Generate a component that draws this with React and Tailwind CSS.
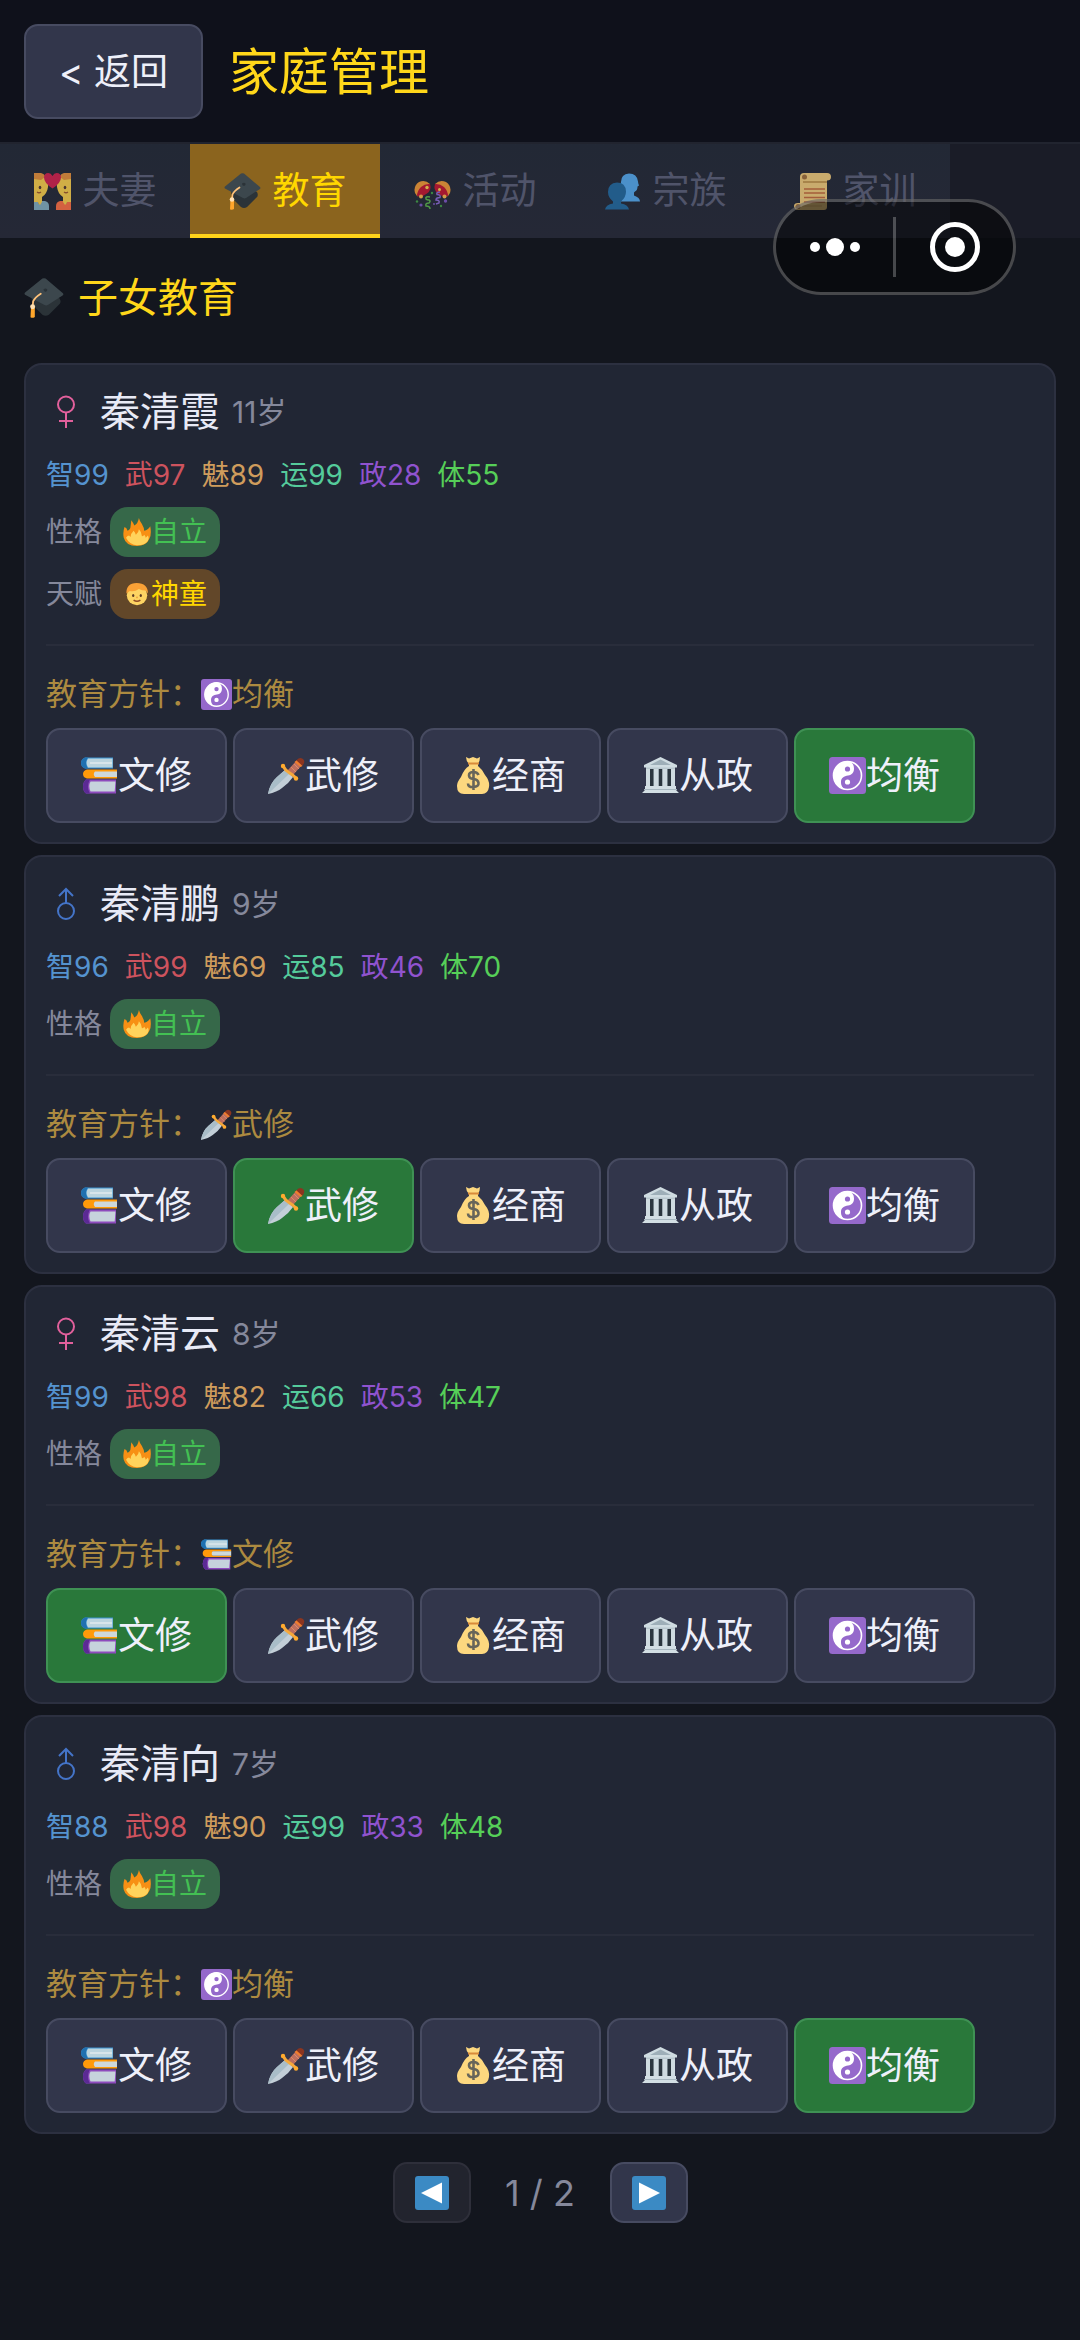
import { useState } from 'react';
import clsx from 'clsx';

const CoupleIcon = ({ className }) => (
  <svg viewBox="0 0 37 37" className={className} aria-hidden="true">
    <path d="M0 3Q6 0 11 3q4 4 3 11-1 7-6 10v5H0z" fill="#fcd04b" />
    <path d="M0 0h7q4 1 4 4l-4 3-7-1z" fill="#e8923a" />
    <path d="M37 3Q31 0 26 3q-4 4-3 11 1 7 6 10v5h8z" fill="#fcd04b" />
    <path d="M37 0h-7q-4 1-4 4l4 3 7-1z" fill="#e8923a" />
    <ellipse cx="6" cy="14.500" rx="1.300" ry="1.800" fill="#543930" />
    <ellipse cx="31" cy="14.500" rx="1.300" ry="1.800" fill="#543930" />
    <path d="M3 19q2 1.500 4 0M34 19q-2 1.500-4 0" stroke="#a05a2c" strokeWidth="1.300" fill="none" />
    <path d="M0 29h4l1 2 2-3h4q4 1 4 5v4H0z" fill="#82aec0" />
    <path d="M37 29h-4l-1 2-2-3h-4q-4 1-4 5v4h15z" fill="#ff7043" />
    <path d="M5 25h3v4l-2 3-2-2zM32 25h-3v4l2 3 2-2z" fill="#fcd04b" />
    <path d="M18.500 15.500Q10 10 10 4.500 10 0 14.300 0q2.700 0 4.200 3Q20 0 22.700 0 27 0 27 4.500q0 5.500-8.500 11z" fill="#d4214d" />
  </svg>
);

const CapIcon = ({ className }) => (
  <svg viewBox="0 0 37 37" className={className} aria-hidden="true">
    <path d="M7 18l13-7 13 8q2 4-1 6l-9 9q-3 2-6 0l-7-7q-3-4-3-9z" fill="#2b3338" />
    <path d="M17 .5q1.500-.7 3 0L36 14q.8 1 0 2L22 25q-1.500.8-3 0L1 15.500q-1-1 0-2z" fill="#3c474d" />
    <path d="M18 10.500q2-1.500 3.500 0 .6 1.500-1.500 2.500-2-.5-2-2.500z" fill="#2b3338" />
    <path d="M15.500 14.500Q10 18 8.500 21.500L8 26" stroke="#ffc27a" strokeWidth="1.700" fill="none" strokeLinecap="round" />
    <path d="M6.500 27h3.500v9q-2 1.500-4 .3z" fill="#ffa62b" />
    <circle cx="8" cy="26.500" r="2.300" fill="#ffe0b2" />
  </svg>
);

const PartyIcon = ({ className }) => (
  <svg viewBox="0 0 37 37" className={className} aria-hidden="true">
    <path d="M1 20Q-1 13 5 9q6-3 11 2L8 21q-3 3-5 2z" fill="#f59b35" />
    <path d="M36 20q2-7-4-11-6-3-11 2l8 10q3 3 5 2z" fill="#f59b35" />
    <path d="M16 11q2 6-3 9.500-5 4-10 2.500 0-5 4-9 4-3.500 9-3z" fill="#c5152f" />
    <path d="M21 11q-2 6 3 9.500 5 4 10 2.500 0-5-4-9-4-3.500-9-3z" fill="#c5152f" />
    <circle cx="13" cy="14.500" r="1.700" fill="#ffd54f" />
    <circle cx="25.500" cy="16.500" r="1.500" fill="#ffd54f" />
    <circle cx="7" cy="23.500" r="2" fill="#ffb74d" />
    <circle cx="30.500" cy="23.500" r="2" fill="#ffb74d" />
    <path d="M16 24q-5-1-4 2 1 1 3 1 2 1 0 3-4 0-3 3 4 0 4 3" stroke="#5cb84c" strokeWidth="1.500" fill="none" />
    <path d="M26 19q-4 0-3 2.500 4 0 3 3-4 0-4 2.500 4 0 3 3l-3 1" stroke="#8e6bd6" strokeWidth="1.500" fill="none" />
    <g fill="#7e57c2">
      <circle cx="7" cy="32" r="1.600" />
      <circle cx="31.500" cy="28" r="1.700" />
      <circle cx="20" cy="31" r="1" />
    </g>
    <g fill="#43a047">
      <circle cx="3" cy="28.500" r="1.200" />
      <circle cx="18" cy="20" r="1.200" />
      <circle cx="27" cy="33" r="1.200" />
    </g>
  </svg>
);

const PeopleIcon = ({ className }) => (
  <svg viewBox="0 0 37 37" className={className} aria-hidden="true">
    <path d="M17 9q0-8 8-8.500 8 0 9 8 0 1.500 1 4l-1.500 1q0 4-2.500 5l-1 1v3q6 2 6 6H15z" fill="#55aaf0" />
    <path d="M4 19q0-9 9-9.500 8.500 0 9 9 0 6-5 10v2q7 1 8 6H1q1-5 8-6v-2q-5-4-5-9.500z" fill="#2269a0" />
  </svg>
);

const ScrollIcon = ({ className }) => (
  <svg viewBox="0 0 37 37" className={className} aria-hidden="true">
    <path d="M6 4q0-4 4-4h23q4 0 4 4 0 3.500-4 3.500V34q0 3-3 3H4q-4 0-4-4 0-3 4-3h2z" fill="#f3cc7b" />
    <path d="M9 8h24v2H9z" fill="#c99b50" />
    <circle cx="10.500" cy="4" r="2.500" fill="#a1703c" />
    <circle cx="4" cy="33.500" r="2.500" fill="#a1703c" />
    <path d="M10 16h21M10 20h21M10 24.500h21M10 29h21" stroke="#c56a3d" strokeWidth="1.700" />
    <path d="M8 33h20" stroke="#d9ae62" strokeWidth="1" />
  </svg>
);

const BooksIcon = ({ className }) => (
  <svg viewBox="0 0 37 37" className={className} aria-hidden="true">
    <path d="M4 .5h28v11H4Q0 10 0 6T4 .5z" fill="#3a92d0" />
    <path d="M4 .5h3q-4 5 0 11H4Q0 10 0 6T4 .5z" fill="#1f70b0" />
    <path d="M7 1.500h24.500v9H7Q4 6 7 1.500z" fill="#bcd5df" />
    <path d="M9 5h22v2H9z" fill="#d8e5ea" />
    <path d="M6 12.500h30V15H14v5h22v1.500H6q-4-1-4-4.500t4-4.500z" fill="#ff9a0a" />
    <path d="M14 14.500h22v5.500H14q-2.500-3 0-5.500z" fill="#ced8da" />
    <path d="M5 22.500h30v14H5Q2 34 2 29.500t3-7z" fill="#8e4bbd" />
    <path d="M5 22.500h4q-4 7 0 14H5Q2 34 2 29.500t3-7z" fill="#5b2a94" />
    <path d="M9.500 24.500H34.500l-.8 10H9.500Q7 29 9.500 24.500z" fill="#c6d3dc" />
  </svg>
);

const DaggerIcon = ({ className }) => (
  <svg viewBox="0 0 37 37" className={className} aria-hidden="true">
    <path d="M0 37Q2 26 9 20l8-7 8 7q-4 6-11 11-5 4-14 6z" fill="#c3cfd8" />
    <path d="M0 37l21-20-4-4-8 7Q2 26 0 37z" fill="#a9bdc8" />
    <path d="M20 13l9-10 5 5-9 10z" fill="#bd6e5e" />
    <path d="M23 10l5 5M26 7l5 5" stroke="#dd8a66" strokeWidth="1" />
    <path d="M15 9q2 4 6 6.500t7 5.500" stroke="#f7a83a" strokeWidth="3" strokeLinecap="round" fill="none" />
    <circle cx="15" cy="9" r="2.200" fill="#ffab2e" />
    <circle cx="28" cy="21.500" r="2.200" fill="#ffab2e" />
    <path d="M28 4q3-5 7-2 3 3-1 7z" fill="#8a3520" />
    <path d="M26.500 5l6 5 2-1-6-5.500z" fill="#f07d2e" />
  </svg>
);

const BagIcon = ({ className }) => (
  <svg viewBox="0 0 37 37" className={className} aria-hidden="true">
    <path d="M11 0l3 1.500L18 0l4 1.500L25 0q0 4-2 7v2q4 3 7 9 5 6 4 12-1 7-7 7H9q-7 0-7-8 0-4 4-9 3-8 8-11V7q-3-3-3-7z" fill="#fdd87f" />
    <path d="M13 6.500h11" stroke="#d98a3a" strokeWidth="2" />
    <path d="M23.500 18q-1-3-5-3-4.500 0-4.500 3.300t4.500 3.700 5 4-5 4-5.500-3.500M18.500 12v21" stroke="#68665a" strokeWidth="2.600" fill="none" />
  </svg>
);

const HallIcon = ({ className }) => (
  <svg viewBox="0 0 37 37" className={className} aria-hidden="true">
    <path d="M4 10h29v22H4z" fill="#b9c8cf" />
    <path d="M7.500 12h4v17h-4zM16.500 12h4v17h-4zM25.500 12h4v17h-4z" fill="#2b363e" />
    <path d="M4 12h4v17H4zM12 12h4.500v17H12zM20.500 12h4.500v17h-4.500zM29 12h4v17h-4z" fill="#cfdbe0" />
    <path d="M18.500 0L35 8v2.500H2V8z" fill="#cfdce1" />
    <path d="M18.500 2.500L29 8H8z" fill="#9eafb8" />
    <path d="M3 29h31v4l3 3H0l3-3z" fill="#d3dfe4" />
    <path d="M2 32.500h33" stroke="#a8b8c0" strokeWidth="1" />
  </svg>
);

const YinYangIcon = ({ className }) => (
  <svg viewBox="0 0 37 37" className={className} aria-hidden="true">
    <rect width="37" height="37" rx="3.500" fill="#9569cb" />
    <circle cx="18.500" cy="18.500" r="14" fill="none" stroke="#fff" strokeWidth="1.600" />
    <path d="M19 4a14.500 14.500 0 1 0 0 29c-6-1-7-5-7-8 0-4 3-6 7-6.500 4-.5 6-3 6-7s-2-6.500-6-7.500z" fill="#fff" />
    <circle cx="18.500" cy="12" r="2.600" fill="#9569cb" />
    <circle cx="18.500" cy="25" r="2.600" fill="#fff" />
  </svg>
);

const FireIcon = ({ className }) => (
  <svg viewBox="0 0 37 37" className={className} aria-hidden="true">
    <path d="M2 12q3 1 4 5 4-2 4-6l1-8q3 4 4 7 5-3 6-10 1 4 4 8 3 5 3 9 5-1 8-6 2 10-1 16-4 10-17 10Q4 37 1 26-.500 19 2 12z" fill="#f78f14" />
    <path d="M4 26q2-3 4-3l2 2q0-4 4-8 2 2 3 5 4-3 4-7 4 4 4 9 2 0 3-2 2 2 2 4l3-3q2 3 0 7-4 6-14 6T4 26z" fill="#ffd35c" />
  </svg>
);

const ChildIcon = ({ className }) => (
  <svg viewBox="0 0 37 37" className={className} aria-hidden="true">
    <circle cx="18.500" cy="20" r="13.500" fill="#fdd463" />
    <path d="M4.500 18Q4 4 18 4q15 0 15 14l-3-4q-5 0-9-2-6 4-12 2.500z" fill="#f9a136" />
    <ellipse cx="13.500" cy="20.500" rx="1.500" ry="2" fill="#5b3b24" />
    <ellipse cx="23.500" cy="20.500" rx="1.500" ry="2" fill="#5b3b24" />
    <path d="M14 26.500q4.500 3 9 0" stroke="#8f4a26" strokeWidth="2" fill="none" />
    <circle cx="18.500" cy="23" r="1.200" fill="#eba240" />
  </svg>
);

const FemaleIcon = () => (
  <svg viewBox="0 0 20 34" className="h-[34px] w-5" fill="none" stroke="#e2609c" strokeWidth="2" role="img" aria-label="女">
    <circle cx="10" cy="9.500" r="8" />
    <path d="M10 17.500V33M3 26h14" />
  </svg>
);

const MaleIcon = () => (
  <svg viewBox="0 0 20 34" className="h-[34px] w-5" fill="none" stroke="#4474c8" strokeWidth="2" role="img" aria-label="男">
    <circle cx="10" cy="24" r="8" />
    <path d="M10 16V2M3 9l7-7 7 7" />
  </svg>
);

const TABS = [
  { id: 'couple', label: '夫妻', icon: CoupleIcon },
  { id: 'education', label: '教育', icon: CapIcon },
  { id: 'activity', label: '活动', icon: PartyIcon },
  { id: 'clan', label: '宗族', icon: PeopleIcon },
  { id: 'rules', label: '家训', icon: ScrollIcon },
];

const POLICIES = [
  { id: 'literary', label: '文修', icon: BooksIcon },
  { id: 'martial', label: '武修', icon: DaggerIcon },
  { id: 'trade', label: '经商', icon: BagIcon },
  { id: 'politics', label: '从政', icon: HallIcon },
  { id: 'balanced', label: '均衡', icon: YinYangIcon },
];

const STATS = [
  { label: '智', color: 'text-[#5593cf]' },
  { label: '武', color: 'text-[#cd535e]' },
  { label: '魅', color: 'text-[#cf9c5c]' },
  { label: '运', color: 'text-[#55cb9b]' },
  { label: '政', color: 'text-[#9053cf]' },
  { label: '体', color: 'text-[#56cf58]' },
];

const CHILDREN = [
  { name: '秦清霞', gender: 'female', age: 11, stats: [99, 97, 89, 99, 28, 55], talent: '神童', policy: 'balanced' },
  { name: '秦清鹏', gender: 'male', age: 9, stats: [96, 99, 69, 85, 46, 70], policy: 'martial' },
  { name: '秦清云', gender: 'female', age: 8, stats: [99, 98, 82, 66, 53, 47], policy: 'literary' },
  { name: '秦清向', gender: 'male', age: 7, stats: [88, 98, 90, 99, 33, 48], policy: 'balanced' },
];

const Trait = ({ title, icon: Icon, value, pill }) => (
  <div className="mt-3 flex items-center gap-2 text-[28px] leading-[50px] text-[#85889b]">
    <span>{title}</span>
    <span className={clsx('flex items-center rounded-[18px] px-[13px]', pill)}>
      <Icon className="size-7" />
      {value}
    </span>
  </div>
);

const ChildCard = ({ child }) => {
  const [policy, setPolicy] = useState(child.policy);
  const current = POLICIES.find((p) => p.id === policy);
  const CurrentIcon = current.icon;

  return (
    <article className="rounded-[18px] border-2 border-[#2c3040] bg-[#212634] px-5 pt-5 pb-[19px]">
      <div className="flex items-center leading-[54px]">
        <span className="mr-3.5 flex w-10 justify-center">
          {child.gender === 'female' ? <FemaleIcon /> : <MaleIcon />}
        </span>
        <h3 className="text-[40px] text-[#e8eaf6]">{child.name}</h3>
        <span className="ml-3 text-[30px] text-[#85889b]">{child.age}岁</span>
      </div>
      <div className="mt-4 flex gap-4 text-[28px] leading-10">
        {STATS.map((stat, i) => (
          <span key={stat.label} className={stat.color}>
            {stat.label}{child.stats[i]}
          </span>
        ))}
      </div>
      <Trait title="性格" icon={FireIcon} value="自立" pill="bg-[#366849] text-[#43c053]" />
      {child.talent && (
        <Trait title="天赋" icon={ChildIcon} value={child.talent} pill="bg-[#624729] text-[#ffd700]" />
      )}
      <div className="mt-[25px] border-t-2 border-[#292d3b] pt-[26px]">
        <p className="flex items-center text-[31px] leading-[44px] text-[#ac8a40]">
          教育方针：
          <CurrentIcon className="size-[31px]" />
          {current.label}
        </p>
        <div className="mt-3 flex flex-wrap gap-1.5">
          {POLICIES.map(({ id, label, icon: Icon }) => (
            <button
              key={id}
              type="button"
              onClick={() => setPolicy(id)}
              className={clsx(
                'flex items-center rounded-[14px] border-2 px-[33px] py-[18px] text-[37px] leading-[55px] text-[#eef0fa]',
                id === policy ? 'border-[#3f9154] bg-[#29783a]' : 'border-[#474b61] bg-[#32364b]'
              )}
            >
              <Icon className="size-[37px]" />
              {label}
            </button>
          ))}
        </div>
      </div>
    </article>
  );
};

const Capsule = () => (
  <div className="absolute top-[199px] right-16 flex h-24 w-[243px] items-center rounded-full border-[3px] border-white/25 bg-black/50">
    <button type="button" aria-label="更多" className="flex flex-1 items-center justify-center gap-1.5">
      <span className="size-2.5 rounded-full bg-white" />
      <span className="size-[18px] rounded-full bg-white" />
      <span className="size-2.5 rounded-full bg-white" />
    </button>
    <span className="h-[60px] w-[3px] bg-white/25" />
    <button type="button" aria-label="关闭" className="flex flex-1 items-center justify-center">
      <span className="flex size-[50px] items-center justify-center rounded-full border-[5px] border-white">
        <span className="size-5 rounded-full bg-white" />
      </span>
    </button>
  </div>
);

const PageButton = ({ label, flip, disabled }) => (
  <button
    type="button"
    aria-label={label}
    disabled={disabled}
    className={clsx(
      'flex h-[61px] w-[78px] items-center justify-center rounded-[14px] border-2',
      disabled ? 'border-[#2e2f3a] bg-[#22242e]' : 'border-[#474b61] bg-[#32364b]'
    )}
  >
    <svg viewBox="0 0 34 34" className={clsx('size-[34px]', flip && 'rotate-180')} aria-hidden="true">
      <rect width="34" height="34" rx="3" fill="#3b8ac4" />
      <path d="M6 17L27 6.500v21z" fill="#fff" />
    </svg>
  </button>
);

export default function App() {
  const [tab, setTab] = useState('education');

  return (
    <div className="relative min-h-screen bg-[#13161e] font-['Inter','Noto_Sans_CJK_SC',sans-serif]">
      <header className="flex items-center gap-[26px] border-b-2 border-[#21242f] bg-[#0f111b] px-6 pt-6 pb-[23px]">
        <button
          type="button"
          className="rounded-[14px] border-2 border-[#474b61] bg-[#32364b] px-[33px] py-[18px] text-[37px] leading-[55px] text-[#eef0fa]"
        >
          &lt; 返回
        </button>
        <h1 className="text-[50px] leading-[60px] text-[#ffd71a]">家庭管理</h1>
      </header>

      <nav className="flex bg-[#1a1c27]">
        {TABS.map(({ id, label, icon: Icon }) => (
          <button
            key={id}
            type="button"
            onClick={() => setTab(id)}
            className={clsx(
              'flex h-[94px] w-[190px] items-center justify-center gap-3 text-[37px]',
              id === tab
                ? 'border-b-4 border-[#ffd31a] bg-[#8b641e] pt-1 text-[#ffd700]'
                : 'bg-linear-to-b from-[#222835] to-[#252836] text-[#50546a]'
            )}
          >
            <Icon className={clsx('size-[37px]', id !== tab && 'opacity-80')} />
            {label}
          </button>
        ))}
      </nav>

      <main className="px-6 pb-12">
        <h2 className="flex items-center gap-3.5 pt-[30px] pb-[35px] text-[40px] leading-[60px] text-[#ffd71a]">
          <CapIcon className="size-10" />
          子女教育
        </h2>
        <div className="flex flex-col gap-[11px]">
          {CHILDREN.map((child) => (
            <ChildCard key={child.name} child={child} />
          ))}
        </div>
        <div className="mt-7 flex items-center justify-center">
          <PageButton label="上一页" disabled />
          <span className="w-[139px] text-center text-[36px] text-[#85889b]">1 / 2</span>
          <PageButton label="下一页" flip />
        </div>
      </main>

      <Capsule />
    </div>
  );
}
